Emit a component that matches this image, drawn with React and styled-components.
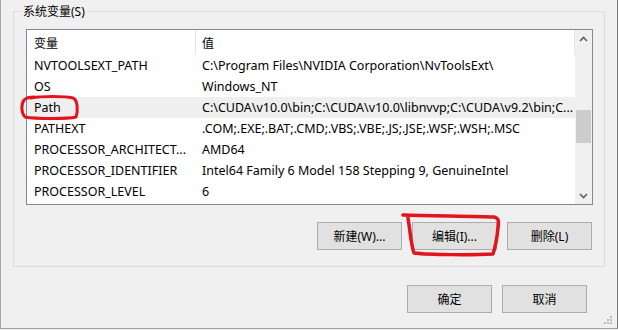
import React from 'react';
import styled, { createGlobalStyle } from 'styled-components';

const GlobalStyle = createGlobalStyle`
  html, body {
    margin: 0;
    padding: 0;
    background: #f0f0f0;
  }
  body {
    font-family: "Noto Sans", "Noto Sans CJK SC", sans-serif;
    font-size: 12px;
    color: #000;
  }
`;

const rows = [
  ['NVTOOLSEXT_PATH', 'C:\\Program Files\\NVIDIA Corporation\\NvToolsExt\\'],
  ['OS', 'Windows_NT'],
  ['Path', 'C:\\CUDA\\v10.0\\bin;C:\\CUDA\\v10.0\\libnvvp;C:\\CUDA\\v9.2\\bin;C...', true],
  ['PATHEXT', '.COM;.EXE;.BAT;.CMD;.VBS;.VBE;.JS;.JSE;.WSF;.WSH;.MSC'],
  ['PROCESSOR_ARCHITECT...', 'AMD64'],
  ['PROCESSOR_IDENTIFIER', 'Intel64 Family 6 Model 158 Stepping 9, GenuineIntel'],
  ['PROCESSOR_LEVEL', '6'],
];

function App() {
  return (
    <>
      <GlobalStyle />
      <Window>
        <GroupBox>
          <Legend>系统变量(S)</Legend>
          <ListBox>
            <Table>
              <HeaderRow>
                <NameCell header>变量</NameCell>
                <ValueCell header>值</ValueCell>
              </HeaderRow>
              {rows.map(([name, value, selected]) => (
                <Row key={name} selected={selected}>
                  <NameCell>{name}</NameCell>
                  <ValueCell>{value}</ValueCell>
                </Row>
              ))}
            </Table>
            <ScrollBar>
              <ArrowButton>
                <svg width="9" height="6" viewBox="0 0 9 6">
                  <path d="M1 5 L4.5 1.5 L8 5" fill="none" stroke="#606060" strokeWidth="1.6" />
                </svg>
              </ArrowButton>
              <Track>
                <Thumb />
              </Track>
              <ArrowButton>
                <svg width="9" height="6" viewBox="0 0 9 6">
                  <path d="M1 1 L4.5 4.5 L8 1" fill="none" stroke="#606060" strokeWidth="1.6" />
                </svg>
              </ArrowButton>
            </ScrollBar>
          </ListBox>
          <ButtonRow>
            <Button>新建(W)...</Button>
            <Button>编辑(I)...</Button>
            <Button>删除(L)</Button>
          </ButtonRow>
        </GroupBox>
        <DialogButtons>
          <Button>确定</Button>
          <Button>取消</Button>
        </DialogButtons>
        <Grip width="12" height="12" viewBox="0 0 12 12">
          <rect x="7" y="1" width="2" height="2" fill="#bcbcbc" />
          <rect x="4" y="4" width="2" height="2" fill="#bcbcbc" />
          <rect x="7" y="4" width="2" height="2" fill="#bcbcbc" />
          <rect x="1" y="7" width="2" height="2" fill="#bcbcbc" />
          <rect x="4" y="7" width="2" height="2" fill="#bcbcbc" />
          <rect x="7" y="7" width="2" height="2" fill="#bcbcbc" />
        </Grip>
        <Marks width="618" height="330" viewBox="0 0 618 330">
          <path
            d="M31 98 C42 96 64 96 73 98 C78 100 78 111 76 117 C68 119 36 119 25 117 C21 113 21 104 24 100 C26 98 28 97 34 97"
            fill="none"
            stroke="#e3141c"
            strokeWidth="3"
            strokeLinecap="round"
            strokeLinejoin="round"
          />
          <path
            d="M403 215 C430 216 478 216 494 217 C499 218 499 222 498 228 C497 238 495 248 493 254 C474 255 430 255 414 253 C411 245 410 230 408 218"
            fill="none"
            stroke="#e3141c"
            strokeWidth="3.5"
            strokeLinecap="round"
            strokeLinejoin="round"
          />
        </Marks>
      </Window>
    </>
  );
}

export default App;

const Window = styled.div`
  position: relative;
  box-sizing: border-box;
  width: 618px;
  height: 329px;
  padding: 11px 0 0 12px;
  background: #f0f0f0;
  border-left: 1px solid #a6a6a6;
  border-right: 1px solid #7c7c7c;
  border-bottom: 1px solid #a0a0a0;
  overflow: hidden;
`;

const GroupBox = styled.div`
  position: relative;
  box-sizing: border-box;
  width: 592px;
  height: 256px;
  padding: 17px 11px 0 12px;
  border: 1px solid #dcdcdc;
`;

const Legend = styled.span`
  position: absolute;
  top: -9px;
  left: 7px;
  padding: 0 2px;
  background: #f0f0f0;
  line-height: 17px;
  white-space: nowrap;
`;

const ListBox = styled.div`
  display: flex;
  box-sizing: border-box;
  height: 176px;
  border: 1px solid #828790;
  background: #fff;
`;

const Table = styled.div`
  flex: 1;
  min-width: 0;
  display: flex;
  flex-direction: column;
  font-size: 12.5px;
`;

const HeaderRow = styled.div`
  display: flex;
  height: 25px;
  font-size: 12px;
  border-right: 1px solid #e5e5e5;
`;

const Row = styled.div`
  display: flex;
  height: 21px;
  background: ${(p) => (p.selected ? '#efefef' : 'transparent')};
`;

const NameCell = styled.div`
  box-sizing: border-box;
  flex: 0 0 169px;
  display: flex;
  align-items: center;
  padding-left: 7px;
  white-space: nowrap;
  overflow: hidden;
  border-right: 1px solid ${(p) => (p.header ? '#e5e5e5' : 'transparent')};
`;

const ValueCell = styled.div`
  flex: 1;
  min-width: 0;
  display: flex;
  align-items: center;
  padding-left: 6px;
  white-space: nowrap;
  overflow: hidden;
`;

const ScrollBar = styled.div`
  flex: 0 0 17px;
  display: flex;
  flex-direction: column;
  background: #f0f0f0;
`;

const ArrowButton = styled.div`
  height: 17px;
  display: flex;
  align-items: center;
  justify-content: center;
`;

const Track = styled.div`
  flex: 1;
  padding-top: 63px;
`;

const Thumb = styled.div`
  width: 15px;
  height: 33px;
  margin: 0 auto;
  background: #cdcdcd;
`;

const ButtonRow = styled.div`
  display: flex;
  justify-content: flex-end;
  gap: 10px;
  margin-top: 17px;
  padding-right: 1px;
`;

const Button = styled.button`
  box-sizing: border-box;
  width: 85px;
  height: 28px;
  padding: 0;
  background: #e1e1e1;
  border: 1px solid #adadad;
  font-family: inherit;
  font-size: 12px;
  color: #000;
`;

const DialogButtons = styled.div`
  display: flex;
  justify-content: flex-end;
  gap: 10px;
  margin-top: 18px;
  padding-right: 30px;
`;

const Grip = styled.svg`
  position: absolute;
  right: 2px;
  bottom: 1px;
`;

const Marks = styled.svg`
  position: absolute;
  left: -1px;
  top: 0;
  pointer-events: none;
`;
